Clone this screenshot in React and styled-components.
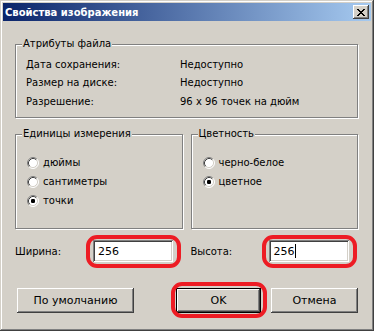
import React from "react";
import styled, { createGlobalStyle } from "styled-components";

const Global = createGlobalStyle`
  html, body { margin: 0; padding: 0; background: #d4d0c8; }
  * { box-sizing: border-box; }
  body { font-family: "DejaVu Sans", Tahoma, sans-serif; font-size: 10px; color: #000; }
`;

const Window = styled.div`
  width: 374px;
  height: 331px;
  padding: 3px;
  background: #d4d0c8;
  box-shadow: inset -1px -1px #404040, inset 1px 1px #d4d0c8,
    inset -2px -2px #808080, inset 2px 2px #ffffff;
  display: flex;
  flex-direction: column;
`;

const TitleBar = styled.div`
  height: 18px;
  display: flex;
  align-items: center;
  padding: 0 2px 0 2px;
  background: linear-gradient(to right, #0a246a, #a6caf0);
`;

const Title = styled.div`
  flex: 1;
  color: #fff;
  font-weight: bold;
  font-size: 10px;
  white-space: nowrap;
`;

const CloseBtn = styled.div`
  width: 16px;
  height: 14px;
  background: #d4d0c8;
  box-shadow: inset -1px -1px #404040, inset 1px 1px #ffffff,
    inset -2px -2px #808080, inset 2px 2px #d4d0c8;
  display: flex;
  align-items: center;
  justify-content: center;
`;

const Body = styled.div`
  flex: 1;
  padding: 23px 13px 0 12px;
  display: flex;
  flex-direction: column;
`;

const Group = styled.div`
  position: relative;
  border: 1px solid #808080;
  box-shadow: inset 1px 1px #ffffff, 1px 1px #ffffff;
  height: ${(p) => p.$h}px;
  padding: ${(p) => p.$pad};
`;

const Legend = styled.div`
  position: absolute;
  top: -7px;
  left: 6px;
  padding: 0 1px;
  background: #d4d0c8;
  line-height: 12px;
  white-space: nowrap;
`;

const InfoRow = styled.div`
  display: grid;
  grid-template-columns: 154px 1fr;
  height: 18.5px;
  align-items: center;
  white-space: nowrap;
`;

const TwoCols = styled.div`
  display: grid;
  grid-template-columns: 1fr 1fr;
  column-gap: 8px;
  margin-top: ${(p) => p.$mt}px;
`;

const RadioRow = styled.div`
  display: flex;
  align-items: center;
  height: 19px;
  gap: 4px;
  white-space: nowrap;
`;

const Field = styled.div`
  display: flex;
  align-items: center;
  height: 22px;
`;

const FieldLabel = styled.div`
  width: 78px;
`;

const InputWrap = styled.div`
  position: relative;
  width: 80px;
  height: 22px;
  &::after {
    content: "";
    position: absolute;
    left: -7px;
    right: -8px;
    top: -5px;
    bottom: -6px;
    border: 4px solid #ed1c24;
    border-radius: 11px;
    pointer-events: none;
  }
`;

const Input = styled.div`
  width: 100%;
  height: 100%;
  background: #fff;
  box-shadow: inset 1px 1px #808080, inset -1px -1px #ffffff,
    inset 2px 2px #404040, inset -2px -2px #d4d0c8;
  display: flex;
  align-items: center;
  padding-left: 5px;
  font-size: 11px;
`;

const Caret = styled.span`
  display: inline-block;
  width: 1px;
  height: 14px;
  background: #000;
`;

const ButtonRow = styled.div`
  display: flex;
  margin-top: 26px;
  padding-left: 2px;
`;

const Button = styled.div`
  position: relative;
  width: ${(p) => p.$w}px;
  height: 25px;
  margin-left: ${(p) => p.$ml || "0px"};
  background: #d4d0c8;
  display: flex;
  align-items: center;
  justify-content: center;
  font-size: 11px;
  box-shadow: ${(p) =>
    p.$default
      ? "inset -1px -1px #000, inset 1px 1px #000, inset -2px -2px #404040, inset 2px 2px #ffffff, inset -3px -3px #808080"
      : "inset -1px -1px #404040, inset 1px 1px #ffffff, inset -2px -2px #808080, inset 2px 2px #d4d0c8"};
  ${(p) =>
    p.$marked &&
    `&::after {
      content: "";
      position: absolute;
      left: -5px;
      right: -6px;
      top: -6px;
      bottom: -5px;
      border: 4px solid #ed1c24;
      border-radius: 11px;
      pointer-events: none;
    }`}
`;

const Radio = ({ checked }) => (
  <svg width="12" height="12" viewBox="0 0 12 12" style={{ flex: "none" }}>
    <circle cx="6" cy="6" r="5" fill="#fff" />
    <path d="M2.11 9.89 A5.5 5.5 0 0 1 9.89 2.11" stroke="#808080" strokeWidth="1" fill="none" />
    <path d="M9.89 2.11 A5.5 5.5 0 0 1 2.11 9.89" stroke="#ffffff" strokeWidth="1" fill="none" />
    <path d="M2.82 9.18 A4.5 4.5 0 0 1 9.18 2.82" stroke="#404040" strokeWidth="1" fill="none" />
    <path d="M9.18 2.82 A4.5 4.5 0 0 1 2.82 9.18" stroke="#d4d0c8" strokeWidth="1" fill="none" />
    {checked && <rect x="4" y="4" width="4" height="4" rx="1.2" fill="#000" />}
  </svg>
);

export default function App() {
  return (
    <>
      <Global />
      <Window>
        <TitleBar>
          <Title>Свойства изображения</Title>
          <CloseBtn>
            <svg width="8" height="7" viewBox="0 0 8 7">
              <path
                d="M0 0h2v1h1v1h2V1h1V0h2v1H7v1H6v1H5v1h1v1h1v1h1v1H6V6H5V5H3v1H2v1H0V6h1V5h1V4h1V3H2V2H1V1H0z"
                fill="#000"
              />
            </svg>
          </CloseBtn>
        </TitleBar>
        <Body>
          <Group $h={74} $pad="10px 0 0 10px">
            <Legend>Атрибуты файла</Legend>
            <InfoRow>
              <span>Дата сохранения:</span>
              <span>Недоступно</span>
            </InfoRow>
            <InfoRow>
              <span>Размер на диске:</span>
              <span>Недоступно</span>
            </InfoRow>
            <InfoRow>
              <span>Разрешение:</span>
              <span>96 x 96 точек на дюйм</span>
            </InfoRow>
          </Group>
          <TwoCols $mt={16}>
            <Group $h={95} $pad="18px 0 0 11px">
              <Legend>Единицы измерения</Legend>
              <RadioRow>
                <Radio />
                <span>дюймы</span>
              </RadioRow>
              <RadioRow>
                <Radio />
                <span>сантиметры</span>
              </RadioRow>
              <RadioRow>
                <Radio checked />
                <span>точки</span>
              </RadioRow>
            </Group>
            <Group $h={95} $pad="18px 0 0 11px">
              <Legend>Цветность</Legend>
              <RadioRow>
                <Radio />
                <span>черно-белое</span>
              </RadioRow>
              <RadioRow>
                <Radio checked />
                <span>цветное</span>
              </RadioRow>
            </Group>
          </TwoCols>
          <TwoCols $mt={11}>
            <Field>
              <FieldLabel>Ширина:</FieldLabel>
              <InputWrap>
                <Input>256</Input>
              </InputWrap>
            </Field>
            <Field>
              <FieldLabel>Высота:</FieldLabel>
              <InputWrap>
                <Input>
                  256
                  <Caret />
                </Input>
              </InputWrap>
            </Field>
          </TwoCols>
          <ButtonRow>
            <Button $w={117}>По умолчанию</Button>
            <Button $w={85} $ml="auto" $default $marked>
              OK
            </Button>
            <Button $w={87} $ml="10px">
              Отмена
            </Button>
          </ButtonRow>
        </Body>
      </Window>
    </>
  );
}
